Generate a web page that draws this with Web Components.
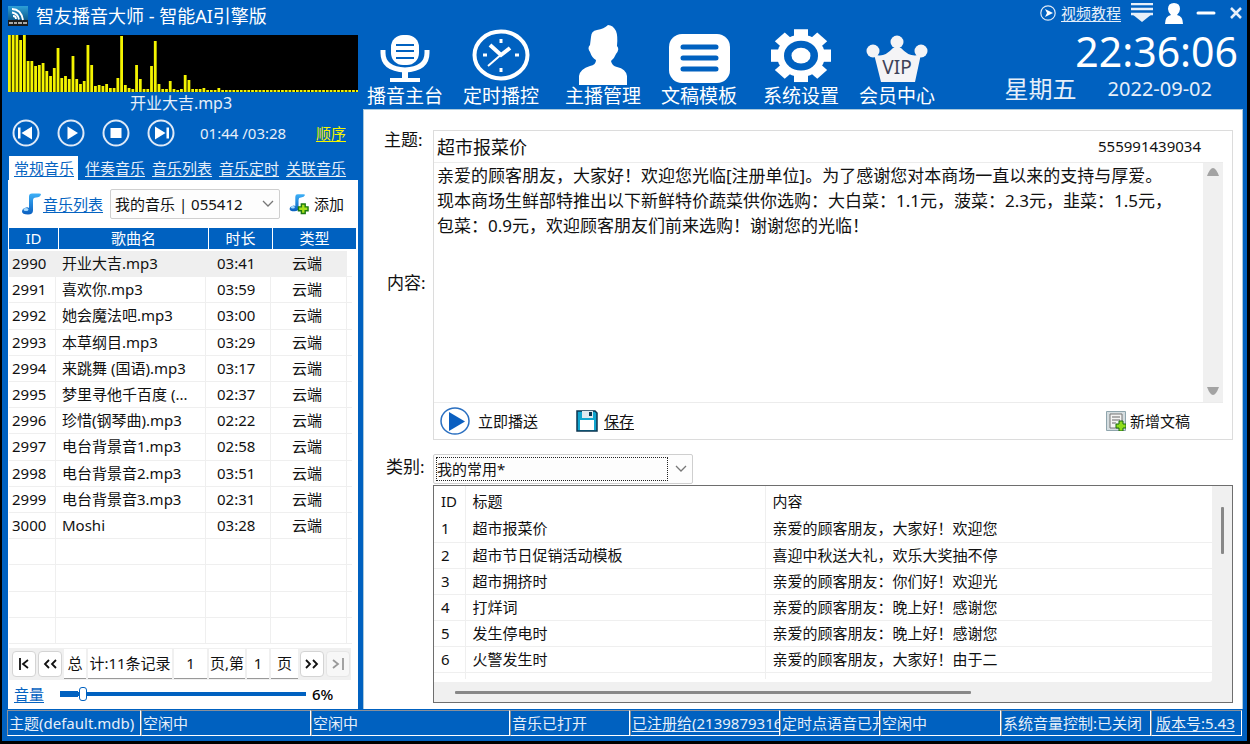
<!DOCTYPE html>
<html lang="zh-CN">
<head>
<meta charset="utf-8">
<title>智友播音大师 - 智能AI引擎版</title>
<style>
  body { margin: 0; background: #000; font: 15px/20px "Noto Sans", "Noto Sans CJK SC", sans-serif; color: #111; }
</style>
</head>
<body>
<broadcast-app></broadcast-app>

<script>
const BASE = `
  :host, *, *::before, *::after { box-sizing: border-box; }
  button, input, select, textarea { font: inherit; color: inherit; margin: 0; padding: 0; border: 0; background: none; outline: 0; }
  a { color: inherit; text-underline-offset: 2px; text-decoration-thickness: 1px; }
  svg { display: block; flex: none; }
`;
function define(name, css, html, init) {
  customElements.define(name, class extends HTMLElement {
    constructor() {
      super();
      const t = document.createElement('template');
      t.innerHTML = `<style>${BASE}${css}</style>` + (typeof html === 'function' ? html(this) : html);
      this.attachShadow({ mode: 'open' }).append(t.content.cloneNode(true));
      if (init) init(this.shadowRoot);
    }
  });
}

const note = `
  <defs><linearGradient id="n" x1="0" y1="0" x2="0" y2="1"><stop offset="0" stop-color="#3db0f7"/><stop offset="1" stop-color="#0a5fc0"/></linearGradient></defs>
  <path d="M9 16V4q0-3 3-3h7q2 0 2 1-1 3-5 3-3 0-3 3v10q0 4-5 4-6 0-6-3 0-3 4-4 2-.5 3 .5z" fill="url(#n)"/>
  <ellipse cx="6" cy="17" rx="2.500" ry="1.500" fill="#a9dcff"/>`;
const plus = `<path d="M14 11h4v3h3v4h-3v3h-4v-3h-3v-4h3z" fill="#a8e01c" stroke="#1d7a10" stroke-width="1.500"/>`;

/* ---- title ---- */
define('app-title', `
  :host { display: flex; align-items: center; gap: 8px; height: 35px; padding-bottom: 3px; color: #fff; font-size: 18px; }
  h1 { margin: 0; font: inherit; white-space: nowrap; }
`, `
  <svg width="20" height="20" viewBox="0 0 20 20">
    <defs><linearGradient id="a" x1="0" y1="0" x2="0" y2="1"><stop offset="0" stop-color="#2d9fd8"/><stop offset="1" stop-color="#0b5788"/></linearGradient></defs>
    <rect width="20" height="15" fill="url(#a)"/><rect y="14" width="20" height="6" fill="#1c1c1c"/>
    <path d="M4 3q9 0 11 11M4 6.500q6 1 7 7M5 10q3 0 3 3" fill="none" stroke="#fff" stroke-width="1.800"/>
    <path d="M1 16h4v2H1zM6 16h3v2H6zM10 16h4v2h-4zM15 16h4v2h-4z" fill="#aaa"/>
  </svg>
  <h1><slot></slot></h1>`);

/* ---- spectrum ---- */
const levels = [57,57,57,52,57,31,31,26,27,29,21,16,24,44,14,16,13,36,13,8,11,47,27,6,7,6,8,4,4,14,56,7,4,3,27,13,3,3,26,51,8,3,3,11,3,2,3,17,12,3,3,3,4,2,2,2,4];
define('spectrum-view', `
  :host { display: block; height: 57px; background: #000; }
  svg { width: 100%; height: 100%; }
`, () => {
  let bars = '';
  for (let i = 0; i < 94; i++) {
    const h = levels[i] || 2;
    bars += `<rect x="${(i * 3.74).toFixed(2)}" y="${57 - h}" width="2.800" height="${h}"/>`;
  }
  return `<svg viewBox="0 0 350 57" preserveAspectRatio="none" fill="#f4f400">${bars}</svg>`;
});

/* ---- player ---- */
const ring = (label, inner) => `<button aria-label="${label}"><svg width="28" height="28" viewBox="0 0 28 28"><circle cx="14" cy="14" r="12.500" fill="none" stroke="#dfeaf7" stroke-width="2"/><g fill="#fff">${inner}</g></svg></button>`;
define('player-controls', `
  :host { display: block; color: #e6eff9; }
  .song { height: 22px; line-height: 22px; text-align: center; font-size: 16px; padding-right: 4px; }
  .row { display: flex; align-items: center; height: 37px; padding: 0 12px 0 4px; }
  .keys { display: flex; gap: 17px; }
  time { margin-left: 25px; font-size: 15px; }
  a { margin-left: auto; color: #f4f400; }
`, `
  <div class="song">开业大吉.mp3</div>
  <div class="row">
    <div class="keys">
      ${ring('上一首', '<path d="M6 8.500h2.500v11H6zM20 7.500v13L9.500 14z"/>')}
      ${ring('播放', '<path d="M10.500 7.500v13L21 14z"/>')}
      ${ring('停止', '<path d="M8.500 9h11v10h-11z"/>')}
      ${ring('下一首', '<path d="M19.500 8.500H22v11h-2.500zM8 7.500v13L18.500 14z"/>')}
    </div>
    <time>01:44 /03:28</time>
    <a href="#order">顺序</a>
  </div>`);

/* ---- tabs ---- */
define('tab-strip', `
  :host { display: flex; gap: 7px; padding: 5px 0 0 1px; color: #e6eff9; line-height: 24px; white-space: nowrap; }
  .on { background: #fff; color: #0563c1; width: 69px; padding-left: 5px; }
`, `
  <a class="on" href="#t1">常规音乐</a><a href="#t2">伴奏音乐</a><a href="#t3">音乐列表</a><a href="#t4">音乐定时</a><a href="#t5">关联音乐</a>`);

/* ---- drop-down ---- */
define('combo-box', `
  :host { display: grid; grid-template-columns: 1fr 22px; align-items: center; height: 30px; border: 1px solid #cfcfcf; background: #fdfdfd; border-radius: 2px; }
  select { appearance: none; grid-area: 1 / 1 / 2 / 3; width: 100%; height: 100%; padding-left: 4px; }
  :host([focusrect]) select { grid-area: 1 / 1; height: 24px; margin-left: 2px; padding-left: 0; width: 232px; border: 1px dotted #222; }
  svg { grid-area: 1 / 2; justify-self: center; pointer-events: none; }
`, el => `<select aria-label="${el.getAttribute('label')}"><option>${el.getAttribute('value')}</option></select>
  <svg width="12" height="8" viewBox="0 0 12 8"><path d="M1 1l5 5 5-5" fill="none" stroke="#777" stroke-width="1.300"/></svg>`);

/* ---- list toolbar ---- */
define('list-toolbar', `
  :host { display: flex; align-items: center; height: 48px; padding: 0 12px; }
  .list { display: flex; align-items: center; color: #0563c1; gap: 1px; }
  combo-box { width: 170px; margin: 0 8px 0 7px; }
  button { display: flex; align-items: center; gap: 5px; }
`, `
  <a class="list" href="#list"><svg width="22" height="24" viewBox="0 0 22 23">${note}</svg>音乐列表</a>
  <combo-box label="音乐列表" value="我的音乐 | 055412"></combo-box>
  <button><svg width="21" height="22" viewBox="0 0 22 22"><g transform="scale(.85)">${note}</g>${plus}</svg>添加</button>`);

/* ---- music table ---- */
const songs = [['2990','开业大吉.mp3','03:41'],['2991','喜欢你.mp3','03:59'],['2992','她会魔法吧.mp3','03:00'],['2993','本草纲目.mp3','03:29'],['2994','来跳舞 (国语).mp3','03:17'],['2995','梦里寻他千百度 (...','02:37'],['2996','珍惜(钢琴曲).mp3','02:22'],['2997','电台背景音1.mp3','02:58'],['2998','电台背景音2.mp3','03:51'],['2999','电台背景音3.mp3','02:31'],['3000','Moshi','03:28']];
define('track-table', `
  :host { display: flex; padding: 0 0 4px 1px; flex: 1; }
  table { display: flex; flex-direction: column; flex: 1; }
  thead { display: block; }
  tbody { display: grid; grid-auto-rows: 1fr; flex: 1; }
  tr { display: grid; }
  thead { background: #0061c0; color: #fff; margin: 0 2px 2px 0; }
  thead tr { grid-template-columns: 50px 150px 64px 1fr; height: 21px; }
  th { font-weight: 400; text-align: center; padding: 0; line-height: 21px; border-right: 1px solid #fff; }
  th:last-child { border: 0; }
  tbody { margin-right: 6px; }
  tbody tr { grid-template-columns: 47px 150px 65px 76px; border-bottom: 1px solid #efefef; }
  td { padding: 0 0 0 6px; line-height: 25px; border-right: 1px solid #efefef; white-space: nowrap; }
  td:first-child { padding-left: 3px; }
  td:nth-child(3) { padding-left: 11px; }
  td:nth-child(4) { padding-left: 21px; }
  .sel td { background: #efefef; }
`, () => {
  const rows = songs.map((s, i) => `<tr${i ? '' : ' class="sel"'}><td>${s[0]}</td><td>${s[1]}</td><td>${s[2]}</td><td>云端</td></tr>`).join('');
  const blank = '<tr><td></td><td></td><td></td><td></td></tr>'.repeat(4);
  return `<table><thead><tr><th>ID</th><th>歌曲名</th><th>时长</th><th>类型</th></tr></thead><tbody>${rows}${blank}</tbody></table>`;
});

/* ---- pager ---- */
const k = d => `<svg width="14" height="12" viewBox="0 0 14 12"><path d="${d}" fill="none" stroke="currentColor" stroke-width="1.800"/></svg>`;
define('page-bar', `
  :host { display: flex; align-items: center; gap: 2px; height: 32px; margin: 0 7px 0 1px; padding: 0 1px 0 3px; background: #f0f0f0; }
  button { width: 24px; height: 26px; background: #fff; border: 1px solid #d4d4d4; border-radius: 4px; display: grid; place-items: center; flex: none; }
  button:disabled { color: #999; background: #f7f7f7; border-color: #e6e6e6; }
  span { height: 30px; line-height: 29px; background: #fff; border-bottom: 1px solid #999; text-align: center; white-space: nowrap; flex: none; }
  .a { width: 22px; } .b { width: 84px; } .c { width: 33px; } .d { width: 36px; } .e { width: 22px; } .f { width: 27px; }
`, `
  <button aria-label="首页">${k('M3 0v12M11 2L6 6l5 4')}</button><button aria-label="上一页">${k('M6 2L2 6l4 4M13 2L9 6l4 4')}</button>
  <span class="a">总</span><span class="b">计:11条记录</span><span class="c">1</span><span class="d">页,第</span><span class="e">1</span><span class="f">页</span>
  <button aria-label="下一页">${k('M1 2l4 4-4 4M8 2l4 4-4 4')}</button><button aria-label="末页" disabled>${k('M2 2l5 4-5 4M12 0v12')}</button>`);

/* ---- volume ---- */
define('volume-bar', `
  :host { display: flex; align-items: center; height: 29px; padding: 0 0 2px 6px; }
  label { color: #0563c1; text-decoration: underline; text-underline-offset: 2px; margin-right: 16px; }
  input { appearance: none; width: 246px; height: 16px; margin-right: 6px;
    background: linear-gradient(#0061c0, #0061c0) 0 50% / 18px 6px no-repeat, linear-gradient(#0061c0, #0061c0) 0 50% / 100% 4px no-repeat; }
  input::-webkit-slider-thumb { appearance: none; width: 8px; height: 14px; background: #fff; border: 1px solid #0061c0; border-radius: 3px; }
  output { font-weight: 500; color: #000; }
`, `<label for="v">音量</label><input id="v" type="range" min="0" max="100" value="8"><output for="v">6%</output>`);

/* ---- music side ---- */
define('music-side', `
  :host { display: flex; flex-direction: column; }
  .panel { flex: 1; display: flex; flex-direction: column; background: #fff; }
`, `
  <app-title>智友播音大师 - 智能AI引擎版</app-title>
  <spectrum-view></spectrum-view>
  <player-controls></player-controls>
  <tab-strip></tab-strip>
  <div class="panel">
    <list-toolbar></list-toolbar><track-table></track-table><page-bar></page-bar><volume-bar></volume-bar>
  </div>`);

/* ---- main navigation ---- */
const teeth = [0,45,90,135,180,225,270,315].map(a => `<path d="M23 -2h14v12H23z" transform="rotate(${a} 30 28)"/>`).join('');
const icons = {
  mic: `<g transform="translate(0 2)"><rect x="16" y="8" width="28" height="30" rx="12" fill="#fff"/><path d="M21 18h18M21 24h18M21 31h18" stroke="#0061c0" stroke-width="2"/><path d="M8 23v3q0 16 22 17 22-1 22-17v-3" fill="none" stroke="#fff" stroke-width="5"/><path d="M27 42h6v9h12v4H15v-4h12z" fill="#fff"/></g>`,
  clock: `<ellipse cx="30" cy="30" rx="26.500" ry="23.500" fill="none" stroke="#fff" stroke-width="4"/><path d="M19 20l11 10 9-7" fill="none" stroke="#fff" stroke-width="4"/><path d="M32 28L17 41" stroke="#fff" stroke-width="2"/><path d="M30 14v4M30 43v4M12 30h4M44 30h4" stroke="#fff" stroke-width="3"/>`,
  host: `<path d="M18 12q0-6 6-7 7-1 11-5 5 0 8 6 2 5 1 15 3 3-1 8-2 5-5 7 1 5 6 6 9 2 10 9v9H6v-9q1-7 11-10 6-1 6-6-4-2-6-8-3-4 0-7z" fill="#fff"/>`,
  doc: `<rect width="61" height="49" x="0" y="9" rx="13" fill="#fff"/><path d="M14 22h33M14 33h33M14 44h33" stroke="#0061c0" stroke-width="5" stroke-linecap="round"/>`,
  gear: `<g fill="#fff" transform="translate(0 6) scale(1 .88)">${teeth}<circle cx="30" cy="28" r="24"/><circle cx="30" cy="28" r="17" fill="#0061c0"/><ellipse cx="30" cy="28" rx="9.500" ry="9"/></g>`,
  vip: `<g fill="#f4f4f6"><circle cx="6" cy="26" r="6.500"/><circle cx="30" cy="17" r="6.500"/><circle cx="54" cy="26" r="6.500"/><path d="M7 29q9 5 19-6h8q10 11 20 6l-6 28H14z"/></g><text x="30" y="49" text-anchor="middle" font-size="19" fill="#3d4258">VIP</text>`
};
define('nav-item', `
  :host { display: block; }
  button { display: flex; flex-direction: column; width: 76px; align-items: center; color: #fff; font-size: 19px; line-height: 22px; white-space: nowrap; }
  svg { overflow: visible; }
`, el => `<button><svg width="60" height="60" viewBox="0 0 60 60">${icons[el.getAttribute('icon')]}</svg><slot></slot></button>`);
define('main-nav', `
  :host { display: grid; grid-template-columns: 96px 102px 96px 102px 96px 76px; padding: 25px 0 0 4px; }
`, `
  <nav-item icon="mic">播音主台</nav-item><nav-item icon="clock">定时播控</nav-item><nav-item icon="host">主播管理</nav-item>
  <nav-item icon="doc">文稿模板</nav-item><nav-item icon="gear">系统设置</nav-item><nav-item icon="vip">会员中心</nav-item>`);

/* ---- clock and window keys ---- */
define('clock-panel', `
  :host { display: flex; flex-direction: column; align-items: flex-end; color: #e6eff9; white-space: nowrap; }
  .bar { display: flex; align-items: center; height: 26px; }
  .bar a { display: flex; align-items: center; gap: 5px; margin-right: 10px; }
  .bar button { display: block; }
  .menu { margin-right: 12px; } .user { margin-right: 13px; } .min { margin-right: 13px; }
  .time { font-size: 41px; line-height: 50px; padding-right: 5px; color: #fff; }
  .date { display: flex; align-items: center; gap: 31px; height: 26px; padding-right: 31px; font-size: 20px; }
  .date b { font-weight: 400; font-size: 24px; }
`, `
  <div class="bar">
    <a href="#video"><svg width="16" height="16" viewBox="0 0 16 16"><circle cx="8" cy="8" r="7.200" fill="none" stroke="#dfeaf7" stroke-width="1.200"/><path d="M5 4l8 4-8 4 2-4z" fill="#fff"/></svg>视频教程</a>
    <button class="menu" aria-label="菜单"><svg width="22" height="20" viewBox="0 0 22 20"><path d="M0 1h22M0 6h22M0 11h22" stroke="#e6eff9" stroke-width="2.500"/><path d="M1 11h20l-10 8z" fill="#e6eff9"/></svg></button>
    <button class="user" aria-label="用户"><svg width="18" height="21" viewBox="0 0 18 21"><path d="M9 0q6 0 6 6 0 3-3 6 6 1 6 9H0q0-8 6-9-3-3-3-6 0-6 6-6z" fill="#fff"/></svg></button>
    <button class="min" aria-label="最小化"><svg width="20" height="12" viewBox="0 0 20 12"><path d="M2 6h16" stroke="#fff" stroke-width="3" stroke-linecap="round"/></svg></button>
    <button aria-label="关闭"><svg width="14" height="14" viewBox="0 0 14 14"><path d="M2 2l10 10M12 2L2 12" stroke="#e6eff9" stroke-width="2.500"/></svg></button>
  </div>
  <div class="time">22:36:06</div>
  <div class="date"><b>星期五</b><span>2022-09-02</span></div>`);

/* ---- script editor ---- */
const article = `亲爱的顾客朋友，大家好！欢迎您光临[注册单位]。为了感谢您对本商场一直以来的支持与厚爱。
现本商场生鲜部特推出以下新鲜特价蔬菜供你选购：大白菜：1.1元，菠菜：2.3元，韭菜：1.5元，
包菜：0.9元，欢迎顾客朋友们前来选购！谢谢您的光临！`;
define('script-editor', `
  :host { display: grid; grid-template-columns: 69px 1fr; }
  .labels { display: flex; flex-direction: column; font-size: 17px; padding-left: 20px; }
  .labels label + label { margin: 123px 0 0 3px; }
  .box { border: 1px solid #dcdcdc; }
  .topic { display: flex; align-items: center; height: 31px; padding: 0 31px 1px 3px; }
  .topic input { flex: 1; min-width: 0; font-size: 18px; height: 28px; }
  .body { display: grid; grid-template-columns: 1fr 20px; height: 241px; margin-right: 9px; border-top: 1px solid #ececec; border-bottom: 1px solid #ececec; }
  textarea { resize: none; overflow: hidden; font-size: 17px; line-height: 25px; padding-left: 3px; width: 100%; height: 100%; }
  .bar { background: #f0f0f0; display: flex; flex-direction: column; justify-content: space-between; align-items: center; padding: 5px 0 7px; }
  .acts { display: flex; align-items: center; height: 36px; padding: 0 42px 0 6px; }
  .acts > * { display: flex; align-items: center; }
  .play { gap: 8px; } .save { gap: 6px; margin-left: 38px; } .new { gap: 4px; margin-left: auto; }
`, `
  <div class="labels"><label for="t">主题:</label><label for="c">内容:</label></div>
  <div class="box">
    <div class="topic"><input id="t" value="超市报菜价"><span>555991439034</span></div>
    <div class="body"><textarea id="c">${article}</textarea>
      <div class="bar"><svg width="12" height="8" viewBox="0 0 12 8"><path d="M0 8q3-8 6-8t6 8z" fill="#a3a3a3"/></svg><svg width="12" height="8" viewBox="0 0 12 8"><path d="M0 0q3 8 6 8t6-8z" fill="#a3a3a3"/></svg></div>
    </div>
    <div class="acts">
      <button class="play"><svg width="30" height="28" viewBox="0 0 30 28"><ellipse cx="15" cy="14" rx="14" ry="13" fill="#fff" stroke="#2a6fc0" stroke-width="1.500"/><path d="M9 5v19l16-9.500z" fill="#0b5fc0"/></svg>立即播送</button>
      <a class="save" href="#save"><svg width="22" height="22" viewBox="0 0 22 22"><path d="M1 1h18l2 2v18H1z" fill="#10a5cf" stroke="#0b3550" stroke-width="1.500"/><path d="M6 1h11v7H6z" fill="#dfe9f0"/><path d="M13 2h3v4h-3z" fill="#0b3550"/><path d="M4 10h14v10H4z" fill="#fff"/></svg>保存</a>
      <button class="new"><svg width="20" height="20" viewBox="0 0 20 20"><path d="M.500.500h19v19H.500z" fill="#d5dde0" stroke="#8fa5ad"/><path d="M4 3h12v14H4z" fill="#f4f4f4" stroke="#777"/><path d="M6 6h8M6 9h8M6 12h4" stroke="#666"/><path d="M13 10h4v3h3v4h-3v3h-4v-3h-3v-4h3z" fill="#8fdc1c" stroke="#186a10"/></svg>新增文稿</button>
    </div>
  </div>`);

/* ---- template list ---- */
const tpl = [['超市报菜价','亲爱的顾客朋友，大家好！欢迎您'],['超市节日促销活动模板','喜迎中秋送大礼，欢乐大奖抽不停'],['超市拥挤时','亲爱的顾客朋友：你们好！欢迎光'],['打烊词','亲爱的顾客朋友：晚上好！感谢您'],['发生停电时','亲爱的顾客朋友：晚上好！感谢您'],['火警发生时','亲爱的顾客朋友，大家好！由于二']];
define('template-list', `
  :host { display: grid; grid-template-columns: 69px 1fr; grid-template-rows: 30px 1fr; row-gap: 1px; flex: 1; }
  label { font-size: 17px; padding: 3px 0 0 22px; }
  combo-box { width: 260px; }
  .frame { grid-column: 2; display: grid; grid-template-columns: 1fr 20px; grid-template-rows: 1fr 20px; border: 1px solid #6e6e6e; background: #f0f0f0; }
  .view { background: #fff; border-radius: 0 0 3px 0; }
  table { width: 100%; table-layout: fixed; border-collapse: collapse; }
  col:nth-child(1) { width: 31px; } col:nth-child(2) { width: 300px; }
  th, td { padding: 0 0 0 7px; text-align: left; font-weight: 400; height: 26px; border-right: 1px solid #efefef; border-bottom: 1px solid #efefef; line-height: 25px; }
  th { height: 30px; border-bottom: 0; }
  th:last-child, td:last-child { border-right: 0; }
  tr.end td { height: 7px; border-bottom: 0; }
  .v { display: flex; justify-content: center; padding-top: 21px; }
  .v i { width: 3px; height: 47px; background: #888; border-radius: 1px; }
  .h { display: flex; align-items: center; padding-left: 21px; }
  .h i { width: 516px; height: 3px; background: #888; border-radius: 1px; }
`, `
  <label>类别:</label><combo-box focusrect label="类别" value="我的常用*"></combo-box>
  <div class="frame">
    <div class="view"><table><colgroup><col><col><col></colgroup>
      <thead><tr><th>ID</th><th>标题</th><th>内容</th></tr></thead>
      <tbody>${tpl.map((r, i) => `<tr><td>${i + 1}</td><td>${r[0]}</td><td>${r[1]}</td></tr>`).join('')}<tr class="end"><td></td><td></td><td></td></tr></tbody></table></div>
    <div class="v"><i></i></div><div class="h"><i></i></div>
  </div>`);

/* ---- status bar ---- */
define('status-bar', `
  :host { display: grid; grid-template-columns: 134fr 170fr 199fr 120fr 150fr 100fr 121fr 150fr 91fr; color: #e6eff9; height: 26px; margin: 1px 1px 0 -1px; }
  span, a { overflow: hidden; white-space: nowrap; line-height: 25px; border: 1px solid; border-color: #8a9099 #fff #fff #8a9099; padding-left: 1px; min-width: 0; }
  a:last-child { padding-left: 4px; }
`, `<span>主题(default.mdb)</span><span>空闲中</span><span>空闲中</span><span>音乐已打开</span><a href="#reg">已注册给(2139879316)</a><span>定时点语音已开启</span><span>空闲中</span><span>系统音量控制:已关闭</span><a href="#ver">版本号:5.43</a>`);

/* ---- shell ---- */
define('broadcast-app', `
  :host { display: flex; flex-direction: column; min-height: calc(100vh - 3px); margin: 0 3px 3px 2px; padding: 0 4px 5px 6px; background: #0061c0; }
  .cols { flex: 1; display: grid; grid-template-columns: 350px 1fr; gap: 5px; }
  main { display: flex; flex-direction: column; min-width: 0; }
  header { display: flex; justify-content: space-between; height: 109px; }
  .sheet { flex: 1; display: flex; flex-direction: column; gap: 14px; background: #fff; border: 1px solid #a9c9dc; border-bottom: 0; padding: 20px 9px 6px 0; }
`, `
  <div class="cols">
    <music-side></music-side>
    <main>
      <header><main-nav></main-nav><clock-panel></clock-panel></header>
      <div class="sheet"><script-editor></script-editor><template-list></template-list></div>
    </main>
  </div>
  <status-bar></status-bar>`);
</script>
</body>
</html>
